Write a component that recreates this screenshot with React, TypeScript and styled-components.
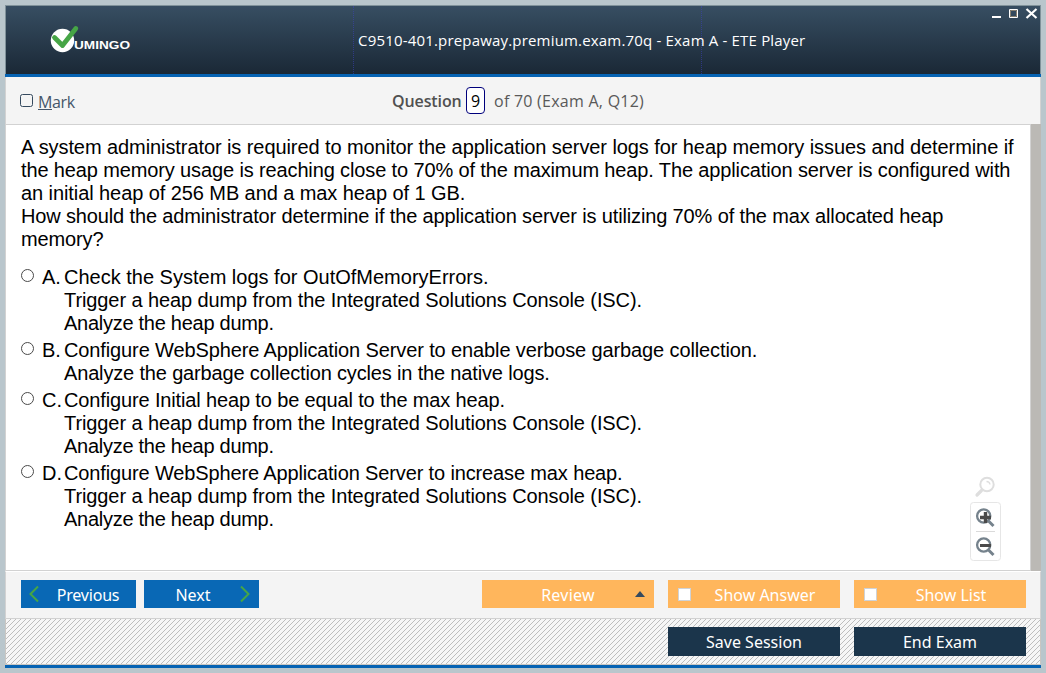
import React from "react";
import styled, { createGlobalStyle } from "styled-components";

const Global = createGlobalStyle`
  * { box-sizing: border-box; }
  body { margin: 0; background: #b9c6cc; }
`;

const hatch =
  "url(\"data:image/svg+xml,%3Csvg xmlns='http://www.w3.org/2000/svg' width='5' height='5' shape-rendering='crispEdges' fill='%23bdbdbd'%3E%3Crect x='0' y='4' width='1' height='1'/%3E%3Crect x='1' y='3' width='1' height='1'/%3E%3Crect x='2' y='2' width='1' height='1'/%3E%3Crect x='3' y='1' width='1' height='1'/%3E%3Crect x='4' y='0' width='1' height='1'/%3E%3C/svg%3E\")";

const Desktop = styled.div`
  height: 673px;
  padding: 5px;
  background: #b9c6cc;
`;

const Frame = styled.div`
  width: 1036px;
  height: 663px;
  display: flex;
  flex-direction: column;
`;

const Header = styled.header`
  position: relative;
  height: 69px;
  border: 1px solid #80929a;
  border-bottom: 0;
  background: linear-gradient(#374e62, #1a2836);
  display: flex;
  flex: none;
`;

const HeaderCell = styled.div<{ $w?: number; $line?: boolean }>`
  ${(p) => (p.$w ? `width: ${p.$w}px;` : "flex: 1;")}
  ${(p) => p.$line && "border-left: 1px dotted rgba(60, 66, 190, 0.55);"}
`;

const Logo = styled.svg`
  display: block;
  margin: 19px 0 0 44px;
`;

const Title = styled.h1`
  position: absolute;
  left: 352px;
  top: 22px;
  margin: 0;
  font: 400 15px/24px "Open Sans", sans-serif;
  letter-spacing: 0.18px;
  white-space: nowrap;
  color: #fff;
`;

const WindowButtons = styled.svg`
  position: absolute;
  right: 2px;
  top: 1px;
`;

const BlueBar = styled.div`
  height: 3px;
  flex: none;
  background: #0663b3;
`;

const Toolbar = styled.div`
  height: 48px;
  flex: none;
  display: flex;
  align-items: center;
  background: #f4f4f4;
  border: 1px solid #d2d2d2;
  border-top: 0;
  color: #595959;
  font: 400 16px/22px "Open Sans", sans-serif;
  white-space: pre;
`;

const MarkLabel = styled.label`
  display: flex;
  align-items: center;
  width: 386px;
  padding: 2px 0 0 14px;
  color: #455669;
  letter-spacing: -0.4px;
`;

const MarkBox = styled.span`
  width: 13px;
  height: 13px;
  margin: -2px 5px 0 0;
  border: 1px solid #34495e;
  border-radius: 2.5px;
`;

const QuestionWord = styled.b`
  width: 74px;
  font-weight: 600;
  letter-spacing: -0.1px;
  color: #505050;
`;

const QuestionNumber = styled.span`
  width: 19px;
  height: 27px;
  margin-right: 9px;
  border: 1px solid #00007c;
  border-radius: 4px;
  background: #fff;
  color: #000;
  text-align: center;
  line-height: 26px;
`;

const QuestionTotal = styled.span`
  letter-spacing: 0.25px;
`;

const Content = styled.main`
  height: 446px;
  flex: none;
  display: flex;
  position: relative;
  background: #fff;
  border: 1px solid #d2d2d2;
  border-width: 0 0 1px 1px;
`;

const Sheet = styled.div`
  flex: 1;
  padding: 11px 0 0 15px;
  font: 400 20px/23px "Liberation Sans", Arial, sans-serif;
  color: #000;
  white-space: nowrap;
`;

const Scrollbar = styled.div`
  width: 11px;
  margin: -1px 0 -1px;
  border-left: 1px solid #d2d2d2;
  background: #bbb9b5;
`;

const Line = styled.div<{ $ls: number }>`
  letter-spacing: ${(p) => p.$ls}px;
`;

const Options = styled.div`
  display: flex;
  flex-direction: column;
  gap: 4px;
  margin-top: 15px;
`;

const Option = styled.label`
  display: flex;
`;

const Radio = styled.span`
  width: 13px;
  height: 13px;
  margin: 3px 8px 0 0;
  border: 1px solid #4a4a4a;
  border-radius: 50%;
`;

const Letter = styled.span`
  width: 22px;
`;

const ZoomTools = styled.svg`
  position: absolute;
  left: 959px;
  top: 345px;
`;

const NavRow = styled.div`
  height: 48px;
  flex: none;
  display: flex;
  align-items: flex-start;
  padding: 8px 14px 0 15px;
  background: #f4f4f4;
  border: 1px solid #d2d2d2;
  border-top: 1px solid #fff;
`;

const SessionRow = styled.div`
  height: 46px;
  flex: none;
  display: flex;
  justify-content: flex-end;
  align-items: flex-start;
  gap: 14px;
  padding: 8px 14px 0;
  background: #f6f6f6 ${hatch};
  border: 1px solid #c9c6c2;
  border-top: 0;
`;

const Button = styled.button<{ $bg: string; $w: number; $h?: number; $left?: number; $right?: number; $ls?: number }>`
  position: relative;
  width: ${(p) => p.$w}px;
  height: ${(p) => p.$h ?? 28}px;
  border: 0;
  padding: ${(p) => (p.$h ? 0 : 2)}px ${(p) => p.$right ?? 0}px 0 ${(p) => p.$left ?? 0}px;
  background: ${(p) => p.$bg};
  color: #fff;
  font: 400 16px/22px "Noto Sans", sans-serif;
  letter-spacing: ${(p) => p.$ls ?? 0}px;
  white-space: nowrap;
`;

const ButtonIcon = styled.svg<{ $x: number; $y: number }>`
  position: absolute;
  left: ${(p) => p.$x}px;
  top: ${(p) => p.$y}px;
`;

const CheckSquare = styled.span`
  position: absolute;
  left: 10px;
  top: 8px;
  width: 13px;
  height: 13px;
  border: 1px solid #cfd2d6;
  background: #fff;
`;

const Spacer = styled.div<{ $w?: number }>`
  ${(p) => (p.$w ? `width: ${p.$w}px;` : "flex: 1;")}
`;

const BLUE = "#0968b5";
const ORANGE = "#ffb65c";
const NAVY = "#1b354b";

type TextLine = [text: string, spacing: number];

const question: TextLine[] = [
  ["A system administrator is required to monitor the application server logs for heap memory issues and determine if", -0.08],
  ["the heap memory usage is reaching close to 70% of the maximum heap. The application server is configured with", -0.13],
  ["an initial heap of 256 MB and a max heap of 1 GB.", -0.08],
  ["How should the administrator determine if the application server is utilizing 70% of the max allocated heap", -0.14],
  ["memory?", -0.14],
];

const trigger: TextLine = ["Trigger a heap dump from the Integrated Solutions Console (ISC).", -0.094];
const analyze: TextLine = ["Analyze the heap dump.", -0.27];

const options: { letter: string; lines: TextLine[] }[] = [
  { letter: "A.", lines: [["Check the System logs for OutOfMemoryErrors.", 0], trigger, analyze] },
  {
    letter: "B.",
    lines: [
      ["Configure WebSphere Application Server to enable verbose garbage collection.", -0.12],
      ["Analyze the garbage collection cycles in the native logs.", -0.16],
    ],
  },
  { letter: "C.", lines: [["Configure Initial heap to be equal to the max heap.", -0.14], trigger, analyze] },
  { letter: "D.", lines: [["Configure WebSphere Application Server to increase max heap.", -0.135], trigger, analyze] },
];

export default function App() {
  return (
    <Desktop>
      <Global />
      <Frame>
        <Header>
          <HeaderCell $w={347}>
            <Logo width="82" height="30" viewBox="50 25 82 30">
              <circle cx="62.5" cy="40.5" r="11.7" fill="#fff" />
              <path d="M54.5 37.5L62.5 45.5L75.8 28.5" fill="none" stroke="#46a546" strokeWidth="4.8" strokeLinecap="round" strokeLinejoin="round" />
              <text x="74" y="49" fill="#fff" fontFamily="Liberation Sans" fontWeight="700" fontSize="10" textLength="56" lengthAdjust="spacingAndGlyphs">UMINGO</text>
            </Logo>
          </HeaderCell>
          <HeaderCell $w={348} $line />
          <HeaderCell $line />
          <Title>C9510-401.prepaway.premium.exam.70q - Exam A - ETE Player</Title>
          <WindowButtons width="48" height="14" viewBox="990 7 48 14">
            <path d="M992 16h9v2h-9z" fill="#fff" />
            <path d="M1009.5 9.5h8v8h-8z" fill="none" stroke="#fff" />
            <path d="M1010.5 10.5h6v6h-6z" fill="none" stroke="#888070" />
            <path d="M1026.5 9l10 9M1036.5 9l-10 9" stroke="#fff" strokeWidth="2.2" />
          </WindowButtons>
        </Header>
        <BlueBar />
        <Toolbar>
          <MarkLabel>
            <MarkBox />
            <span><u>M</u>ark</span>
          </MarkLabel>
          <QuestionWord>Question</QuestionWord>
          <QuestionNumber>9</QuestionNumber>
          <QuestionTotal>of 70 (Exam A, Q12)</QuestionTotal>
        </Toolbar>
        <Content>
          <Sheet>
            {question.map(([text, spacing]) => (
              <Line key={text} $ls={spacing}>{text}</Line>
            ))}
            <Options>
              {options.map(({ letter, lines }) => (
                <Option key={letter}>
                  <Radio />
                  <Letter>{letter}</Letter>
                  <div>
                    {lines.map(([text, spacing]) => (
                      <Line key={text} $ls={spacing}>{text}</Line>
                    ))}
                  </div>
                </Option>
              ))}
            </Options>
          </Sheet>
          <Scrollbar />
          <ZoomTools width="44" height="96" viewBox="965 470 44 96">
            <g fill="none" stroke="#dedede">
              <circle cx="987" cy="484.5" r="6.7" strokeWidth="2" />
              <path d="M986.5 481.5q3 0 3.5 3" strokeWidth="1.3" />
              <path d="M981.5 490.5L977 495" strokeWidth="3.2" strokeLinecap="round" />
            </g>
            <rect x="970.5" y="502.5" width="30" height="58" rx="3" fill="#fff" stroke="#e6e6e6" />
            <path d="M976 531.5h19" stroke="#dadada" />
            <g fill="none" stroke="#75828c">
              <circle cx="983.7" cy="516" r="6.6" strokeWidth="2.3" />
              <path d="M988.5 521l5 5" strokeWidth="3" />
              <circle cx="983.7" cy="545" r="6.6" strokeWidth="2.3" />
              <path d="M988.5 550l5 5" strokeWidth="3" />
            </g>
            <path d="M980 517.5h11M985.5 512v11" stroke="#4a4a4a" strokeWidth="3.4" />
            <path d="M980 545.5h11" stroke="#4a4a4a" strokeWidth="3" />
          </ZoomTools>
        </Content>
        <NavRow>
          <Button $bg={BLUE} $w={115} $left={19} $ls={-0.2}>
            Previous
            <ButtonIcon $x={7} $y={5} width="12" height="18">
              <path d="M10 1.5L2.5 9L10 16.5" fill="none" stroke="#46a546" strokeWidth="2" />
            </ButtonIcon>
          </Button>
          <Spacer $w={8} />
          <Button $bg={BLUE} $w={115} $right={17}>
            Next
            <ButtonIcon $x={95} $y={5} width="12" height="18">
              <path d="M2 1.5L9.5 9L2 16.5" fill="none" stroke="#46a546" strokeWidth="2" />
            </ButtonIcon>
          </Button>
          <Spacer />
          <Button $bg={ORANGE} $w={172} $ls={0.25}>
            Review
            <ButtonIcon $x={153} $y={11} width="10" height="6">
              <path d="M0 6L5 0L10 6z" fill="#34495e" />
            </ButtonIcon>
          </Button>
          <Spacer $w={14} />
          <Button $bg={ORANGE} $w={172} $left={22}>
            <CheckSquare />
            Show Answer
          </Button>
          <Spacer $w={14} />
          <Button $bg={ORANGE} $w={172} $left={22}>
            <CheckSquare />
            Show List
          </Button>
        </NavRow>
        <SessionRow>
          <Button $bg={NAVY} $w={172} $h={29}>Save Session</Button>
          <Button $bg={NAVY} $w={172} $h={29}>End Exam</Button>
        </SessionRow>
        <BlueBar />
      </Frame>
    </Desktop>
  );
}
